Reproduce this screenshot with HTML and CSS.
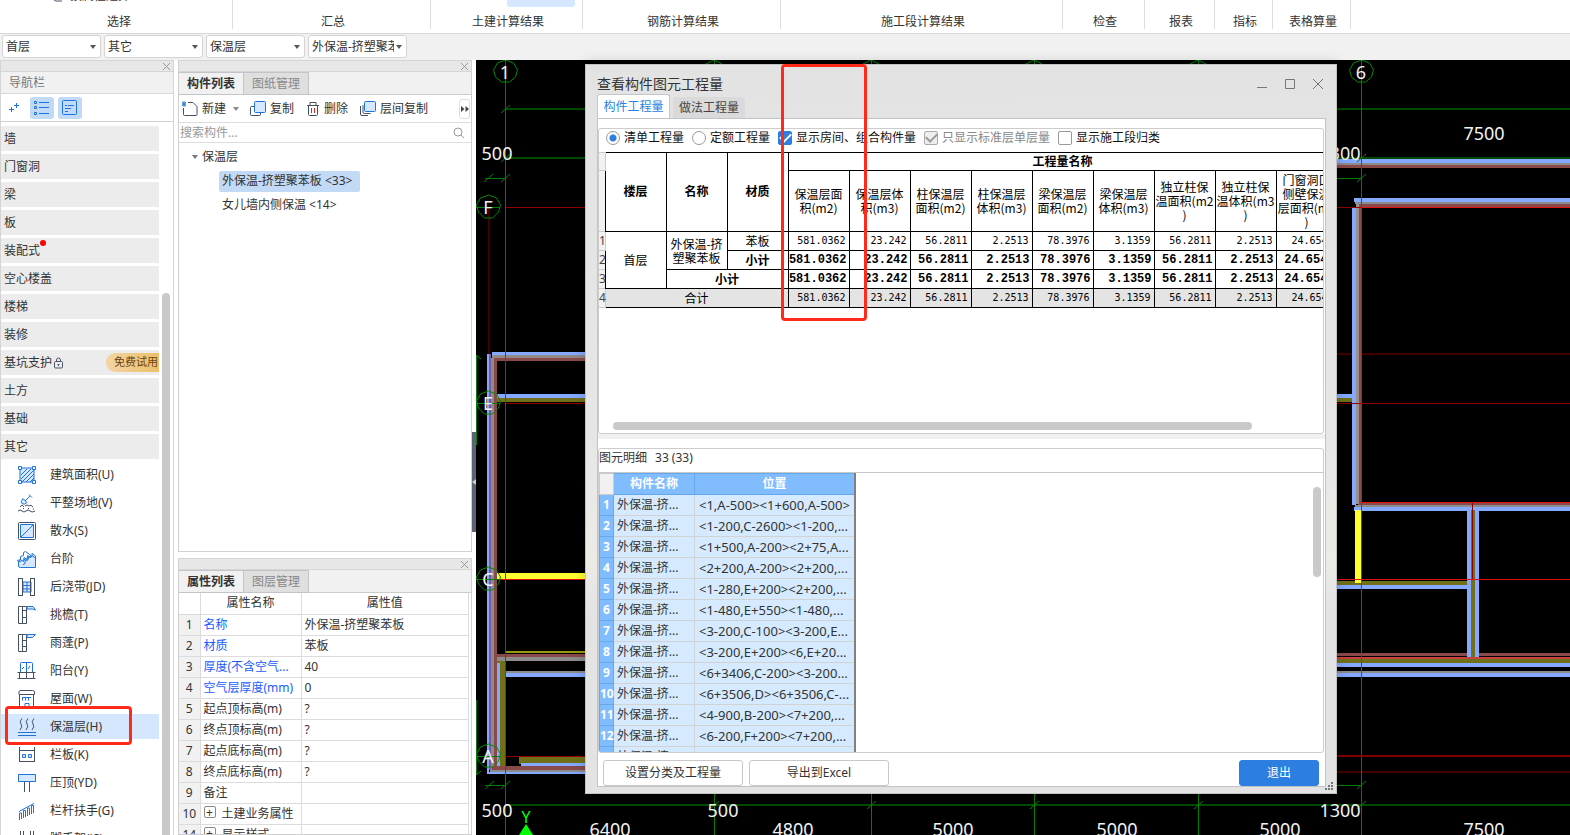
FILE: index.html
```html
<!DOCTYPE html>
<html lang="zh-CN">
  <head>
    <meta charset="utf-8" />
    <meta name="viewport" content="width=device-width, initial-scale=1" />
    <title>查看构件图元工程量</title>
    <link rel="stylesheet" href="styles.css">
  </head>
  <body>
    <!-- ribbon -->
    <header class="ribbon">
      <div class="group g-select">
        <span class="cut">
          <svg width="12" height="14" viewBox="0 0 12 14"><path d="M2 3v8q0 2 2 2h6" fill="none" stroke="#4a5568" /></svg>
          按属性选择
        </span>
        <span>选择</span>
      </div>
      <div class="group g-sum"><span>汇总</span></div>
      <div class="group g-civil"><i class="active-tool"></i><span>土建计算结果</span></div>
      <div class="group g-steel"><span>钢筋计算结果</span></div>
      <div class="group g-stage"><span>施工段计算结果</span></div>
      <div class="group g-check"><span>检查</span></div>
      <div class="group g-report"><span>报表</span></div>
      <div class="group g-index"><span>指标</span></div>
      <div class="group g-table"><span>表格算量</span></div>
    </header>

    <!-- floor / type / component pickers -->
    <div class="filters">
      <div class="pick"><select aria-label="楼层"><option>首层</option></select></div>
      <div class="pick"><select aria-label="类型"><option>其它</option></select></div>
      <div class="pick"><select aria-label="构件类型"><option>保温层</option></select></div>
      <div class="pick"><select aria-label="构件"><option>外保温-挤塑聚苯板</option></select></div>
    </div>

    <main class="work">
      <!-- navigation -->
      <aside class="nav">
        <div class="strip"><button class="x" aria-label="关闭导航栏"><svg width="9" height="9" viewBox="0 0 9 9"><path d="M1 1l7 7M8 1l-7 7" /></svg></button></div>
        <div class="nav-title">导航栏</div>
        <div class="nav-tools">
          <button aria-label="展开"><svg width="24" height="22" viewBox="0 0 24 22"><path d="M7 12.500h5M9.500 10v5M12 8.500h5M14.500 6v5" /></svg></button>
          <button class="on" aria-label="列表"><svg width="24" height="22" viewBox="0 0 24 22"><path d="M4.500 4.500h2v2h-2zM4.500 9.500h2v2h-2zM4.500 15.500h2v2h-2zM9 5.500h10M9 10.500h10M9 16.500h10" /></svg></button>
          <button class="on" aria-label="卡片"><svg width="24" height="22" viewBox="0 0 24 22"><rect x="4.500" y="3.500" width="14" height="14" rx="1" /><path d="M7 8.500h2M10 8.500h6M7 11.500h6M7 14.500h3" /></svg></button>
        </div>
        <div class="nav-body">
          <ul class="tree">
            <li class="cat">墙</li>
            <li class="cat">门窗洞</li>
            <li class="cat">梁</li>
            <li class="cat">板</li>
            <li class="cat">装配式<i class="dot"></i></li>
            <li class="cat">空心楼盖</li>
            <li class="cat">楼梯</li>
            <li class="cat">装修</li>
            <li class="cat">基坑支护<svg class="lock" width="11" height="12" viewBox="0 0 11 12"><rect x="1.500" y="4.500" width="8" height="6.500" rx="1" /><path d="M3.500 4.500v-1.500q0-2 2-2t2 2v1.500M5.500 7v2M4.500 7.500h2" /></svg><em class="trial">免费试用</em></li>
            <li class="cat">土方</li>
            <li class="cat">基础</li>
            <li class="cat">其它</li>
            <li class="item">
              <svg viewBox="0 0 20 20"><path class="f" d="M3 3h14v14H3z" /><path d="M4 10l6-6M4 14L14 4M5 17L17 5M9 17l8-8M13 17l4-4" /><path class="w" d="M1.500 1.500h3v3h-3zM15.500 1.500h3v3h-3zM1.500 15.500h3v3h-3zM15.500 15.500h3v3h-3z" /></svg>
              建筑面积(U)
            </li>
            <li class="item">
              <svg viewBox="0 0 20 20"><path class="f" d="M6 5.500l4 4q-3 3-5 1t1-5z" /><path d="M8 8l5-5M12 1.500l3 3" /><path class="k" d="M1 18q2-2 4 0t4 0 4 0 5 0M3 14l2-2 2 2M8 13q2-2 4 0 2-2 4 1M6 15.500h1M11 15.500h1M16 16h1" /></svg>
              平整场地(V)
            </li>
            <li class="item">
              <svg viewBox="0 0 20 20"><rect class="k" x="1.500" y="1.500" width="17" height="17" rx="1" /><path class="f" d="M3.500 3.500h13v13h-13z" /><path d="M4 16L16 4" /></svg>
              散水(S)
            </li>
            <li class="item">
              <svg viewBox="0 0 20 20"><path class="f" d="M1.500 13v4q0 1.500 2 1.500h15V9l-3-2z" /><path class="w" d="M1.500 13l2-2.500 3 2 .5-4 3 2 .5-4 3 2 .5-2-5.500-4-2 1v3l-3 1v3l-3 1z" /><path d="M6 16l2-1.500v-3l3-.5V8l4-.5v-3l3.500 2.500V9" /></svg>
              台阶
            </li>
            <li class="item">
              <svg viewBox="0 0 20 20"><path class="f" d="M6 5h8v10H6z" /><path d="M6 8.500h8M6 12h8M10 5v10" /><rect class="k" x="1.500" y="1.500" width="4" height="17" /><rect class="k" x="13.500" y="1.500" width="4" height="17" /></svg>
              后浇带(JD)
            </li>
            <li class="item">
              <svg viewBox="0 0 20 20"><path class="k" d="M5.500 1.500h-4v17h4zM5.500 1.500h4v17h-4zM5.500 5.500h4M5.500 12.500h4" /><path class="f" d="M10 1.500h6l2.500 3.500-3-1H10z" /></svg>
              挑檐(T)
            </li>
            <li class="item">
              <svg viewBox="0 0 20 20"><path class="k" d="M5.500 1.500h-4v17h4zM5.500 1.500h4v17h-4zM5.500 7.500h4M5.500 13.500h4" /><path class="f" d="M10 1.500h8.500l-3 3H10z" /></svg>
              雨蓬(P)
            </li>
            <li class="item">
              <svg viewBox="0 0 20 20"><path class="w" d="M3.500 11V2.500q0-1 1-1h10q1 0 1 1V11M9.500 2v9M5 8l2-2M11 8l2-3" /><path class="k" d="M.5 11.500h18M2.500 11.500v6M9.500 11.500v6M16.500 11.500v6M.5 17.500h18" /></svg>
              阳台(Y)
            </li>
            <li class="item">
              <svg viewBox="0 0 20 20"><path class="k" d="M2.500 5.500V18.500h14V5.500M2 5.500h15.500V3q0-1.500-2-1.500H4Q2 1.500 2 3z" /><path d="M5 8.500h9M5.500 8.500v3M8.500 8.500v3M11.500 8.500v3M8 18.500v-4h4v4" /></svg>
              屋面(W)
            </li>
            <li class="item current">
              <svg viewBox="0 0 20 20"><path class="k" d="M5 1.500q-3 3-1 5.500t-1 6M11 1.500q-3 3-1 5.500t-1 6M17 1.500q-3 3-1 5.500t-1 6" /><path d="M1 15.500h18M1 18.500h18" /></svg>
              保温层(H)
            </li>
            <li class="item">
              <svg viewBox="0 0 20 20"><path class="k" d="M2.500 2v14.500M17.500 2v14.500M2.500 5.500h15M2 16.500h16" /><path class="f" d="M5.500 9.500h3v3h-3zM11.500 9.500h3v3h-3z" /></svg>
              栏板(K)
            </li>
            <li class="item">
              <svg viewBox="0 0 20 20"><path class="f" d="M1.500 1.500h17v7h-17z" /><path class="k" d="M7.500 9v10M12.500 9v10" /></svg>
              压顶(YD)
            </li>
            <li class="item">
              <svg viewBox="0 0 20 20"><path d="M2 10.500l15-8M2.500 19v-7h2v6M6.500 17V9.500h2V16M10.500 15V7h2v7M14.500 13V4.500h2V12" /></svg>
              栏杆扶手(G)
            </li>
            <li class="item">
              <svg viewBox="0 0 20 20"><path class="k" d="M3.500 2v16M6.500 2v16M13.500 2v16M16.500 2v16" /><path d="M2 7.500h17M2 13.500h17" /></svg>
              脚手架(JS)
            </li>
          </ul>
          <i class="nav-scroll"></i>
        </div>
        <i class="mark mark-nav"></i>
      </aside>

      <div class="side">
        <!-- component list -->
        <section class="panel list">
          <div class="strip"><button class="x" aria-label="关闭构件列表"><svg width="9" height="9" viewBox="0 0 9 9"><path d="M1 1l7 7M8 1l-7 7" /></svg></button></div>
          <div class="tabs"><button class="tab on">构件列表</button><button class="tab">图纸管理</button></div>
          <div class="tools">
            <button><svg width="16" height="16" viewBox="0 0 16 16"><path class="k" d="M6 1.500h5l4 4v8q0 1-1 1H2.500q-1 0-1-1V7" /><path d="M0 1l4 4M4 1L0 5M2 0v6M0 3h4" /></svg>新建</button>
            <i class="caret"></i>
            <button class="copy"><svg width="16" height="16" viewBox="0 0 16 16"><path class="k" d="M4 5.500H1.500q-1 0-1 1v7q0 1 1 1h8q1 0 1-1V12" /><rect class="f" x="4.500" y=".5" width="11" height="11" rx="1" /></svg>复制</button>
            <button class="del"><svg width="14" height="16" viewBox="0 0 14 16"><path class="k" d="M1 4.500h12M4 4V1.500h6V4M2.500 5v8.500q0 1 1 1h7q1 0 1-1V5" /><path class="r" d="M5.500 7v5M8.500 7v5" /></svg>删除</button>
            <button class="floor"><svg width="16" height="16" viewBox="0 0 16 16"><path class="k" d="M.5 5v8q0 1.500 1.500 1.500h6M3 4v7q0 1.500 1.500 1.500h6" /><rect class="f" x="4.500" y=".5" width="11" height="10" rx="1" /></svg>层间复制</button>
            <button class="more" aria-label="更多"><svg width="8" height="6" viewBox="0 0 8 6"><path d="M0 0l3.500 3L0 6zM4.500 0L8 3 4.500 6z" /></svg></button>
          </div>
          <div class="search">
            <input type="text" placeholder="搜索构件..." aria-label="搜索构件" />
            <svg width="12" height="12" viewBox="0 0 12 12"><circle cx="5" cy="5" r="4" /><path d="M8 8l3 3" /></svg>
          </div>
          <ul class="comps">
            <li class="root"><i class="caret"></i>保温层</li>
            <li><span class="sel">外保温-挤塑聚苯板 &lt;33&gt;</span></li>
            <li><span>女儿墙内侧保温 &lt;14&gt;</span></li>
          </ul>
        </section>

        <!-- properties -->
        <section class="panel props">
          <div class="strip"><button class="x" aria-label="关闭属性列表"><svg width="9" height="9" viewBox="0 0 9 9"><path d="M1 1l7 7M8 1l-7 7" /></svg></button></div>
          <div class="tabs"><button class="tab on">属性列表</button><button class="tab">图层管理</button></div>
          <table class="prop-table">
            <colgroup><col class="c-no" /><col class="c-name" /><col /></colgroup>
            <tr><th></th><th>属性名称</th><th>属性值</th></tr>
            <tr><th>1</th><td class="key">名称</td><td>外保温-挤塑聚苯板</td></tr>
            <tr><th>2</th><td class="key">材质</td><td>苯板</td></tr>
            <tr><th>3</th><td class="key">厚度(不含空气...</td><td>40</td></tr>
            <tr><th>4</th><td class="key">空气层厚度(mm)</td><td>0</td></tr>
            <tr><th>5</th><td>起点顶标高(m)</td><td>?</td></tr>
            <tr><th>6</th><td>终点顶标高(m)</td><td>?</td></tr>
            <tr><th>7</th><td>起点底标高(m)</td><td>?</td></tr>
            <tr><th>8</th><td>终点底标高(m)</td><td>?</td></tr>
            <tr><th>9</th><td>备注</td><td></td></tr>
            <tr><th>10</th><td><button class="plus">+</button>土建业务属性</td><td></td></tr>
            <tr><th>14</th><td><button class="plus">+</button>显示样式</td><td></td></tr>
          </table>
        </section>
        <i class="handle"></i>
      </div>

      <!-- drawing area -->
      <section class="canvas">
        <svg class="plan" viewBox="476 60 1094 775" preserveAspectRatio="xMinYMin slice">
          <!-- walls, left part -->
          <path stroke="#400000" stroke-width="2" d="M489 207v147M1336 354h234M1336 772h234" />
          <g class="walls">
            <path stroke="#84a9ff" stroke-width="3" d="M492 353.500h100" />
            <path stroke="#908a8a" stroke-width="3" d="M492 356.500h100" />
            <path stroke="#8b4a4a" stroke-width="3" d="M494 359h100" />
            <path stroke="#84a9ff" stroke-width="4" d="M497 396h90" />
            <path stroke="#70701a" stroke-width="4" d="M497 400h90" />
            <path stroke="#ffff30" stroke-width="6" d="M496 576h90" />
            <path stroke="#9a9a10" stroke-width="2" d="M505 652h80" />
            <path stroke="#8b4a4a" stroke-width="3" d="M492 655h94" />
            <path stroke="#8c8c8c" stroke-width="4" d="M492 659h94" />
            <path stroke="#8c8c8c" stroke-width="2" d="M491 672h94" />
            <path stroke="#84a9ff" stroke-width="4" d="M490 675h96" />
            <path stroke="#70701a" stroke-width="10" d="M500.500 661v105" />
            <path stroke="#84a9ff" stroke-width="4" d="M498 663v103" />
            <path stroke="#70701a" stroke-width="8" d="M519 760h67" />
            <path stroke="#84a9ff" stroke-width="3" d="M521 764h65" />
            <path stroke="#84a9ff" stroke-width="2" d="M488 354v420" />
            <path stroke="#7a5a9a" stroke-width="2" d="M490 354v416" />
            <path stroke="#8c8c8c" stroke-width="3" d="M492.500 358v412" />
            <path stroke="#8b4a4a" stroke-width="3" d="M495 358v412" />
            <path stroke="#8b4a4a" stroke-width="4" d="M492 768h94" />
            <path stroke="#8c8c8c" stroke-width="2" d="M490 771h96" />
            <path stroke="#84a9ff" stroke-width="2" d="M487 773h99" />
          </g>
          <!-- walls, right part -->
          <g class="walls">
            <path stroke="#84a9ff" stroke-width="4" d="M1336 161h234M1354 200h216M1336 396h16M1354 509h216M1336 587h131M1336 665h234M1336 675h234" />
            <path stroke="#8c8c8c" stroke-width="2" d="M1336 164h234M1355 203h215M1355 506h215M1336 672h234" />
            <path stroke="#8b4a4a" stroke-width="3" d="M1336 166.500h234M1358 205.500h212M1358 503.500h212M1336 654.500h234" />
            <path stroke="#84a9ff" stroke-width="4" d="M1354 207v298M1469 510v147M1477 510v147" />
            <path stroke="#9a9090" stroke-width="3" d="M1357.500 204v300" />
            <path stroke="#8b4a4a" stroke-width="3" d="M1360 204v300" />
            <path stroke="#70701a" stroke-width="4" d="M1336 400h16M1336 582.500h131M1473 510v147M1336 661h234" />
            <path stroke="#c84040" stroke-width="2" d="M1336 658h234" />
            <path stroke="#ffff30" stroke-width="6" d="M1358 510v73" />
          </g>
          <!-- axes -->
          <path stroke="#900000" d="M505 207.500h80M505 403.500h80M505 756.500h80M1336 207.500h25M1336 403.500h234M1472.500 502v78" />
          <path stroke="#800000" stroke-width="2" d="M1336 756h234" />
          <path stroke="#e01010" d="M496 579.500h90M1336 579.500h234M1361.500 207v549M1361 207.500h209M1361 502.500h209" />
          <path stroke="#f00000" d="M505.500 207v549" />
          <path stroke="#004a00" stroke-width="2" d="M505 109h80M505 158h80M1336 109h234M1336 158h234M505 805h1065" />
          <path stroke="#008000" d="M505.500 60v147M505.500 757v78M1361.500 60v147M1361.500 757v78M714.500 60v775M871.500 60v775M1034.500 60v775M1198.500 60v775M485 178.500h20M1336 178.500h25M485 785.500h20M1336 785.500h25M476.500 355v90M476 207.500h24M476 403.500h24M476 579.500h24M476 756.500h24M476.500 700v75" />
          <path stroke="#008000" fill="none" d="M501 113l9-8M501 162l9-8M501 182l9-8M484 182l9-8M501 789l9-8M485 789l9-8M1357 162l9-8M1357 182l9-8M1357 789l9-8M1357 809l9-8M1194 809l9-8M1030 809l9-8M867 809l9-8M710 809l9-8M476 355l5 4M476 775l5-4" />
          <g class="bubbles">
            <path d="M505.500 60l8 3 4 7-2 7-6 5h-8l-6-5-2-7 4-7z" />
            <path d="M1361.500 60l8 3 4 7-2 7-6 5h-8l-6-5-2-7 4-7z" />
            <path d="M488.500 195l8 3 4 7-2 7-6 6h-8l-6-6-2-7 4-7z" />
            <path d="M488.500 391l8 3 4 7-2 7-6 6h-8l-6-6-2-7 4-7z" />
            <path d="M488.500 567l8 3 4 7-2 7-6 6h-8l-6-6-2-7 4-7z" />
            <path d="M488.500 744l8 3 4 7-2 7-6 6h-8l-6-6-2-7 4-7z" />
            <path d="M706 64l8-4 8 4M863 64l8-4 8 4M1026 64l8-4 8 4M1190 64l8-4 8 4" />
          </g>
          <g class="axis-text">
            <text x="505" y="79">1</text>
            <text x="1361" y="79">6</text>
            <text x="488" y="214">F</text>
            <text x="488" y="410">E</text>
            <text x="488" y="586">C</text>
            <text x="488" y="763">A</text>
            <text x="497" y="160">500</text>
            <text x="1340" y="160">1300</text>
            <text x="1484" y="140">7500</text>
            <text x="497" y="817">500</text>
            <text x="723" y="817">500</text>
            <text x="1340" y="817">1300</text>
            <text x="610" y="836">6400</text>
            <text x="793" y="836">4800</text>
            <text x="953" y="836">5000</text>
            <text x="1117" y="836">5000</text>
            <text x="1280" y="836">5000</text>
            <text x="1484" y="836">7500</text>
            <text class="y-axis" x="526" y="823">Y</text>
          </g>
          <path fill="#00ff00" d="M526 824l7 11h-14z" />
        </svg>

        <!-- quantity window -->
        <div class="dialog" role="dialog" aria-labelledby="dlg-title">
          <div class="dlg-bar">
            <h1 id="dlg-title">查看构件图元工程量</h1>
            <button aria-label="最小化"><svg width="12" height="12" viewBox="0 0 12 12"><path d="M1 9.500h10" /></svg></button>
            <button aria-label="最大化"><svg width="12" height="12" viewBox="0 0 12 12"><path d="M1.500 1.500h9v9h-9z" /></svg></button>
            <button aria-label="关闭"><svg width="12" height="12" viewBox="0 0 12 12"><path d="M1 1l10 10M11 1L1 11" /></svg></button>
          </div>
          <div class="dlg-tabs"><button class="on">构件工程量</button><button>做法工程量</button></div>
          <div class="dlg-body">
            <div class="box quantities">
              <div class="options">
                <label><input type="radio" name="mode" checked />清单工程量</label>
                <label><input type="radio" name="mode" />定额工程量</label>
                <label><input type="checkbox" checked />显示房间、组合构件量</label>
                <label class="off"><input type="checkbox" checked disabled />只显示标准层单层量</label>
                <label><input type="checkbox" />显示施工段归类</label>
              </div>
              <div class="sheet-wrap">
                <table class="sheet">
                  <colgroup><col class="c-row" /><col span="12" class="c-val" /></colgroup>
                  <tr class="h1"><th class="no"></th><th rowspan="2">楼层</th><th rowspan="2">名称</th><th rowspan="2">材质</th><th colspan="9">工程量名称</th></tr>
                  <tr class="h2"><th class="no"></th><td>保温层面<br>积(m2)</td><td>保温层体<br>积(m3)</td><td>柱保温层<br>面积(m2)</td><td>柱保温层<br>体积(m3)</td><td>梁保温层<br>面积(m2)</td><td>梁保温层<br>体积(m3)</td><td>独立柱保<br>温面积(m2<br>)</td><td>独立柱保<br>温体积(m3<br>)</td><td>门窗洞口<br>侧壁保温<br>层面积(m2<br>)</td></tr>
                  <tr><th class="no">1</th><td rowspan="3">首层</td><td rowspan="2">外保温-挤<br>塑聚苯板</td><td>苯板</td><td class="n">581.0362</td><td class="n">23.242</td><td class="n">56.2811</td><td class="n">2.2513</td><td class="n">78.3976</td><td class="n">3.1359</td><td class="n">56.2811</td><td class="n">2.2513</td><td class="n">24.6542</td></tr>
                  <tr class="sub"><th class="no">2</th><td>小计</td><td class="n">581.0362</td><td class="n">23.242</td><td class="n">56.2811</td><td class="n">2.2513</td><td class="n">78.3976</td><td class="n">3.1359</td><td class="n">56.2811</td><td class="n">2.2513</td><td class="n">24.6542</td></tr>
                  <tr class="sub"><th class="no">3</th><td colspan="2">小计</td><td class="n">581.0362</td><td class="n">23.242</td><td class="n">56.2811</td><td class="n">2.2513</td><td class="n">78.3976</td><td class="n">3.1359</td><td class="n">56.2811</td><td class="n">2.2513</td><td class="n">24.6542</td></tr>
                  <tr class="total"><th class="no">4</th><td colspan="3">合计</td><td class="n">581.0362</td><td class="n">23.242</td><td class="n">56.2811</td><td class="n">2.2513</td><td class="n">78.3976</td><td class="n">3.1359</td><td class="n">56.2811</td><td class="n">2.2513</td><td class="n">24.6542</td></tr>
                </table>
              </div>
              <i class="h-scroll"></i>
            </div>
            <div class="splitter"></div>
            <div class="box details">
              <div class="details-title"><span>图元明细</span><span>33 (33)</span></div>
              <div class="details-wrap">
                <table class="locs">
                  <colgroup><col class="c-idx" /><col class="c-comp" /><col /></colgroup>
                  <tr><th class="blank"></th><th>构件名称</th><th>位置</th></tr>
                  <tr><th>1</th><td>外保温-挤...</td><td>&lt;1,A-500&gt;&lt;1+600,A-500&gt;</td></tr>
                  <tr><th>2</th><td>外保温-挤...</td><td>&lt;1-200,C-2600&gt;&lt;1-200,...</td></tr>
                  <tr><th>3</th><td>外保温-挤...</td><td>&lt;1+500,A-200&gt;&lt;2+75,A...</td></tr>
                  <tr><th>4</th><td>外保温-挤...</td><td>&lt;2+200,A-200&gt;&lt;2+200,...</td></tr>
                  <tr><th>5</th><td>外保温-挤...</td><td>&lt;1-280,E+200&gt;&lt;2+200,...</td></tr>
                  <tr><th>6</th><td>外保温-挤...</td><td>&lt;1-480,E+550&gt;&lt;1-480,...</td></tr>
                  <tr><th>7</th><td>外保温-挤...</td><td>&lt;3-200,C-100&gt;&lt;3-200,E...</td></tr>
                  <tr><th>8</th><td>外保温-挤...</td><td>&lt;3-200,E+200&gt;&lt;6,E+20...</td></tr>
                  <tr><th>9</th><td>外保温-挤...</td><td>&lt;6+3406,C-200&gt;&lt;3-200...</td></tr>
                  <tr><th>10</th><td>外保温-挤...</td><td>&lt;6+3506,D&gt;&lt;6+3506,C-...</td></tr>
                  <tr><th>11</th><td>外保温-挤...</td><td>&lt;4-900,B-200&gt;&lt;7+200,...</td></tr>
                  <tr><th>12</th><td>外保温-挤...</td><td>&lt;6-200,F+200&gt;&lt;7+200,...</td></tr>
                  <tr><th></th><td>外保温-挤...</td><td></td></tr>
                </table>
                <i class="v-scroll"></i>
              </div>
            </div>
            <div class="dlg-foot">
              <button>设置分类及工程量</button>
              <button>导出到Excel</button>
              <button class="primary">退出</button>
            </div>
          </div>
          <svg class="grip" width="9" height="9" viewBox="0 0 9 9"><path d="M6 0h2v2H6zM3 3h2v2H3zM6 3h2v2H6zM0 6h2v2H0zM3 6h2v2H3zM6 6h2v2H6z" /></svg>
        </div>
        <i class="mark mark-col"></i>
      </section>
    </main>
  </body>
</html>
```
FILE: styles.css
```css
* {
  box-sizing: border-box;
}

body {
  margin: 0;
  height: 100vh;
  display: flex;
  flex-direction: column;
  overflow: hidden;
  font: 12px/18px 'Noto Sans', 'Noto Sans CJK SC', sans-serif;
  color: #333;
  background: #fff;
}

button,
input,
select {
  font: inherit;
  color: inherit;
}

button {
  padding: 0;
  border: 0;
  background: none;
  white-space: nowrap;
}

ul {
  margin: 0;
  padding: 0;
  list-style: none;
}

svg {
  flex: none;
}

/* ribbon */
.ribbon {
  display: flex;
  flex: none;
  height: 33px;
  overflow: hidden;
}

.group {
  position: relative;
  display: flex;
  justify-content: center;
  height: 29px;
  padding-top: 13px;
  padding-left: 3px;
  border-right: 1px solid #ddd;
}

.g-select { width: 233px; padding-left: 6px; }
.g-sum { width: 198px; }
.g-civil { width: 152px; }
.g-steel { width: 198px; }
.g-stage { width: 282px; }
.g-check { width: 82px; }
.g-report { width: 70px; }
.g-index { width: 58px; }
.g-table { width: 78px; }

.cut {
  position: absolute;
  left: 52px;
  top: -12px;
  display: flex;
  gap: 6px;
  line-height: 16px;
}

.active-tool {
  position: absolute;
  left: 76px;
  top: 0;
  width: 68px;
  height: 7px;
  background: #d5e8ff;
  border-radius: 0 0 3px 3px;
}

/* pickers */
.filters {
  display: flex;
  flex: none;
  gap: 3px;
  height: 27px;
  padding: 1px 2px;
  background: #f1f1f1;
  border-top: 1px solid #d8d8d8;
}

.pick {
  position: relative;
  width: 99px;
}

.pick select {
  width: 100%;
  height: 23px;
  padding: 0 12px 0 3px;
  appearance: none;
  background: #fff;
  border: 1px solid #d5d5d5;
  border-radius: 3px;
}

.pick::after,
.caret {
  content: '';
  border: 3px solid transparent;
  border-top: 4px solid #555;
  border-bottom: 0;
}

.pick::after {
  position: absolute;
  right: 5px;
  top: 10px;
}

/* work area */
.work {
  display: flex;
  flex: 1;
  min-height: 0;
}

.strip {
  display: flex;
  flex: none;
  justify-content: flex-end;
  height: 12px;
  padding-right: 2px;
  background: #e7e7e7;
  border: 1px solid #d5d5d5;
  border-width: 1px 0;
}

.x {
  display: flex;
  align-items: center;
}

.x svg {
  stroke: #999;
}

/* navigation */
.nav {
  position: relative;
  display: flex;
  flex: none;
  flex-direction: column;
  width: 174px;
  border: 1px solid #d5d5d5;
  border-width: 0 1px;
}

.nav-title {
  height: 22px;
  padding-left: 8px;
  line-height: 21px;
  color: #777;
  background: #f1f1f1;
  border-bottom: 1px solid #d8d8d8;
}

.nav-tools {
  display: flex;
  gap: 4px;
  height: 28px;
  padding: 3px 1px;
  border-bottom: 1px solid #d0d0d0;
}

.nav-tools button {
  width: 24px;
  height: 22px;
  border-radius: 3px;
}

.nav-tools .on {
  background: #c2daf5;
}

.nav-tools svg {
  fill: none;
  stroke: #1a73e8;
}

.nav-body {
  display: flex;
  flex: 1;
  gap: 3px;
  min-height: 0;
  padding-top: 4px;
  overflow: hidden;
}

.tree {
  width: 158px;
}

.tree li {
  position: relative;
  display: flex;
  align-items: center;
  height: 25px;
  margin-bottom: 3px;
}

.cat {
  padding-left: 3px;
  background: #ececec;
}

.dot {
  width: 6px;
  height: 6px;
  margin-bottom: 16px;
  border-radius: 50%;
  background: #f00;
}

.lock {
  margin-left: 1px;
  fill: none;
  stroke: #4a5568;
}

.trial {
  margin-left: auto;
  height: 19px;
  padding-left: 8px;
  padding-right: 1px;
  font-style: normal;
  font-size: 11px;
  color: #6b4210;
  background: linear-gradient(90deg, #f3d5a5, #ecc068);
  border-radius: 9px 0 0 9px;
}

.item {
  gap: 13px;
  padding-left: 16px;
}

.item svg {
  width: 20px;
  height: 20px;
}

.item svg,
.tools svg {
  fill: none;
  stroke: #1f73dc;
}

.item .f,
.tools .f {
  fill: #d5e8ff;
}

.item .w {
  fill: #fff;
}

.item .k,
.tools .k {
  stroke: #465063;
}

.tools .r {
  stroke: #d22;
}

.current {
  background: #d4e7ff;
}

.nav-scroll {
  width: 8px;
  margin-top: 167px;
  background: #c9c9c9;
  border-radius: 4px 4px 0 0;
}

/* side panels */
.side {
  position: relative;
  display: flex;
  flex: none;
  flex-direction: column;
  gap: 6px;
  width: 302px;
  padding: 0 4px;
}

.panel {
  display: flex;
  flex-direction: column;
  width: 294px;
  border: 1px solid #d0d0d0;
  border-top: 0;
}

.list {
  flex: 493;
}

.props {
  flex: 277;
  min-height: 0;
  overflow: hidden;
}

.tabs {
  display: flex;
  flex: none;
  height: 23px;
  background: #f1f1f1;
  border-bottom: 1px solid #ccc;
}

.tab {
  width: 65px;
  height: 23px;
  color: #888;
  background: #dfdfdf;
  border: 1px solid #c4c4c8;
  border-left: 0;
}

.tab.on {
  font-weight: bold;
  color: #333;
  background: #f1f1f1;
}

.tools {
  display: flex;
  align-items: center;
  height: 28px;
  padding: 1px 1px 0 3px;
  border-bottom: 1px solid #ddd;
}

.tools button {
  display: flex;
  align-items: center;
  gap: 4px;
}

.tools .caret {
  margin: 0 11px 0 7px;
  border-top-color: #888;
}

.tools .del {
  margin-left: 12px;
}

.tools .floor {
  margin-left: 12px;
}

.tools .more {
  justify-content: center;
  width: 11px;
  height: 20px;
  margin-left: auto;
  border: 1px solid #ddd;
  border-radius: 3px;
}

.tools .more svg {
  fill: #444;
  stroke: none;
}

.search {
  display: flex;
  align-items: center;
  height: 20px;
  padding-right: 6px;
  border-bottom: 1px solid #ddd;
}

.search input {
  flex: 1;
  min-width: 0;
  padding: 0 1px;
  border: 0;
  outline: 0;
}

.search input::placeholder {
  color: #999;
}

.search svg {
  fill: none;
  stroke: #999;
}

.comps {
  padding-top: 2px;
}

.comps li {
  display: flex;
  align-items: center;
  height: 24px;
  padding-left: 40px;
}

.comps .root {
  gap: 4px;
  padding-left: 13px;
}

.comps .root .caret {
  border-top-color: #777;
}

.comps span {
  padding: 1px 8px 2px 3px;
}

.comps .sel {
  background: #c2daf5;
  border-radius: 2px;
}

.prop-table {
  width: 290px;
  table-layout: fixed;
  border-collapse: collapse;
}

.prop-table .c-no {
  width: 21px;
}

.prop-table .c-name {
  width: 101px;
}

.prop-table th,
.prop-table td {
  height: 21px;
  padding: 0 3px;
  line-height: 18px;
  font-weight: normal;
  text-align: left;
  white-space: nowrap;
  border: 1px solid #dcdcdc;
}

.prop-table th {
  padding: 0;
  text-align: center;
}

.prop-table th:first-child {
  background: #f1f1f1;
  border-left: 0;
}

.prop-table tr:first-child th {
  background: #fff;
  border-top: 0;
}

.prop-table .key {
  color: #1a5cff;
}

.plus {
  width: 12px;
  height: 12px;
  margin-right: 6px;
  line-height: 9px;
  vertical-align: 1px;
  border: 1px solid #888;
  border-radius: 2px;
}

.handle {
  position: absolute;
  right: 0;
  top: 372px;
  width: 4px;
  height: 100px;
  background: #5a6472;
}

.handle::after {
  content: '';
  position: absolute;
  top: 47px;
  left: 0;
  border: 3px solid transparent;
  border-left: 0;
  border-right: 4px solid #ccc;
}

/* drawing */
.canvas {
  position: relative;
  flex: 1;
  min-width: 0;
  background: #000;
}

.plan {
  display: block;
  width: 100%;
  height: 100%;
}

.walls {
  shape-rendering: crispEdges;
}

.bubbles {
  fill: none;
  stroke: #008a00;
}

.axis-text {
  font-size: 18px;
  fill: #f2f2f2;
  text-anchor: middle;
}

.axis-text .y-axis {
  font-size: 16px;
  fill: #0f0;
}

/* quantity window */
.dialog {
  position: absolute;
  left: 109px;
  right: 233px;
  top: 4px;
  bottom: 41px;
  display: flex;
  flex-direction: column;
  padding: 0 10px 6px 11px;
  background: linear-gradient(#e3e3e3, #e6e6e6 50%, #ecebe6 68%, #e3e3e3 75%);
  border: 1px solid #c4c4c4;
  box-shadow: 0 0 14px rgba(0, 0, 0, 0.2);
}

.dlg-bar {
  display: flex;
  flex: none;
  align-items: center;
  gap: 16px;
  height: 29px;
  padding-top: 8px;
  padding-right: 2px;
}

.dlg-bar h1 {
  flex: 1;
  margin: 0;
  font-size: 14px;
  line-height: 20px;
  font-weight: normal;
}

.dlg-bar button {
  display: flex;
}

.dlg-bar svg {
  fill: none;
  stroke: #777;
}

.dlg-tabs {
  display: flex;
  flex: none;
  align-items: flex-end;
  gap: 3px;
  height: 24px;
}

.dlg-tabs button {
  width: 72px;
  height: 21px;
  color: #444;
  background: #dadada;
  border-radius: 3px 3px 0 0;
}

.dlg-tabs .on {
  width: 73px;
  height: 24px;
  color: #2a7fe0;
  background: #fff;
  border: 1px solid #c4c8cc;
  border-bottom: 0;
}

.dlg-body {
  display: flex;
  flex: 1;
  flex-direction: column;
  min-height: 0;
  background: #fff;
  border: 1px solid #c0c4c8;
}

.box {
  margin-right: 1px;
  border: 1px solid #ccc;
  border-radius: 3px;
  overflow: hidden;
}

.quantities {
  display: flex;
  flex: none;
  flex-direction: column;
  height: 306px;
  margin-top: 9px;
}

.options {
  display: flex;
  align-items: center;
  height: 18px;
  padding-left: 7px;
  margin-bottom: 5px;
}

.options label {
  display: flex;
  align-items: center;
  gap: 4px;
  margin-right: 8px;
  white-space: nowrap;
  color: #111;
}

.options .off {
  color: #888;
}

.options input {
  width: 14px;
  height: 14px;
  margin: 0;
  appearance: none;
  background: #fff;
  border: 1px solid #999;
  border-radius: 2px;
}

.options input[type='radio'] {
  border-radius: 50%;
}

.options input[type='radio']:checked {
  background: radial-gradient(#2a7fe0 3px, #fff 4px);
}

.options input[type='checkbox']:checked {
  display: grid;
  place-items: center;
  background: #2a7fe0;
  border-color: #2a7fe0;
}

.options input[type='checkbox']:checked::after {
  content: '';
  width: 9px;
  height: 5px;
  margin-bottom: 3px;
  border: 1px solid #fff;
  border-width: 0 0 2px 2px;
  transform: rotate(-45deg);
}

.options input[type='checkbox']:disabled {
  background: #eee;
  border-color: #aaa;
}

.options input[type='checkbox']:disabled::after {
  border-color: #999;
}

.sheet-wrap {
  flex: 1;
  overflow: hidden;
}

.sheet {
  width: 738px;
  table-layout: fixed;
  border-collapse: collapse;
  color: #000;
}

.c-row {
  width: 6px;
}

.c-val {
  width: 61px;
}

.sheet th,
.sheet td {
  height: 19px;
  padding: 0;
  line-height: 14px;
  text-align: center;
  white-space: nowrap;
  border: 1px solid #000;
}

.sheet td {
  font-family: 'Noto Sans CJK SC', sans-serif;
}

.sheet .h1 th {
  height: 18px;
}

.sheet .h2 td {
  height: 61px;
}

.sheet .n {
  padding-right: 3px;
  font-family: 'DejaVu Sans Mono', monospace;
  font-size: 10px;
  text-align: right;
}

.sheet .sub td {
  font-weight: bold;
}

.sheet .sub .n {
  padding-right: 2px;
  font-family: 'Liberation Mono', monospace;
  font-size: 12px;
}

.sheet .total td {
  background: #e4e4e4;
}

.sheet .no {
  font-weight: normal;
  color: #444;
  background: #f1f1f1;
  border: 1px solid #ccc;
  border-left: 0;
}

.h-scroll {
  height: 8px;
  margin: 0 71px 3px 14px;
  background: #c9c9c9;
  border-radius: 4px;
}

.splitter {
  flex: none;
  height: 5px;
  background: #f0f0f0;
}

.details {
  display: flex;
  flex: 1;
  flex-direction: column;
  min-height: 0;
  margin-top: 9px;
}

.details-title {
  display: flex;
  flex: none;
  gap: 8px;
  height: 24px;
  border-bottom: 1px solid #c8c8c8;
}

.details-wrap {
  display: flex;
  flex: 1;
  justify-content: space-between;
  min-height: 0;
  overflow: hidden;
}

.locs {
  align-self: flex-start;
  width: 257px;
  table-layout: fixed;
  border-collapse: collapse;
  border-right: 2px solid #808080;
}

.c-idx {
  width: 14px;
}

.c-comp {
  width: 81px;
}

.locs th,
.locs td {
  height: 21px;
  padding: 0;
  line-height: 18px;
  border: 1px solid #d2d2d2;
  white-space: nowrap;
}

.locs th {
  color: #fff;
  background: #80bcff;
  border-color: #64a8ee;
}

.locs .blank {
  background: #f1f1f1;
  border-color: #ccc;
}

.locs td {
  padding-left: 3px;
  background: #d5eaff;
}

.locs td:last-child {
  padding-left: 4px;
  font-size: 13px;
}

.v-scroll {
  width: 8px;
  height: 90px;
  margin: 14px 2px 0 0;
  background: #c9c9c9;
  border-radius: 4px;
}

.dlg-foot {
  display: flex;
  flex: none;
  gap: 6px;
  height: 33px;
  padding: 7px 6px 0 5px;
}

.dlg-foot button {
  width: 140px;
  height: 26px;
  border: 1px solid #c8c8c8;
  border-radius: 3px;
}

.dlg-foot .primary {
  width: 80px;
  margin-left: auto;
  color: #fff;
  background: #2c7fe0;
  border-color: #2c7fe0;
}

.grip {
  position: absolute;
  right: 2px;
  bottom: 2px;
  fill: #777;
}

/* red callouts */
.mark {
  position: absolute;
  border: 3px solid #ff2a1a;
  border-radius: 4px;
}

.mark-nav {
  left: 4px;
  top: 646px;
  width: 127px;
  height: 39px;
}

.mark-col {
  left: 305px;
  top: 4px;
  width: 86px;
  height: 257px;
}
```
